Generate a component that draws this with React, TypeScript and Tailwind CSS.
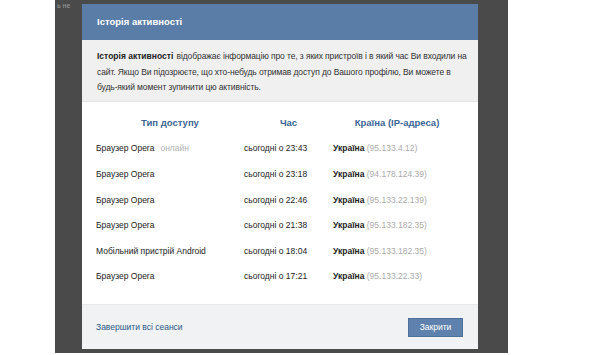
import React from 'react';

type Session = {
  device: string;
  online?: boolean;
  time: string;
  ip: string;
};

const sessions: Session[] = [
  { device: 'Браузер Opera', online: true, time: 'сьогодні о 23:43', ip: '95.133.4.12' },
  { device: 'Браузер Opera', time: 'сьогодні о 23:18', ip: '94.178.124.39' },
  { device: 'Браузер Opera', time: 'сьогодні о 22:46', ip: '95.133.22.139' },
  { device: 'Браузер Opera', time: 'сьогодні о 21:38', ip: '95.133.182.35' },
  { device: 'Мобільний пристрій Android', time: 'сьогодні о 18:04', ip: '95.133.182.35' },
  { device: 'Браузер Opera', time: 'сьогодні о 17:21', ip: '95.133.22.33' },
];

export default function App() {
  return (
    <div className="w-[600px] h-[355px] bg-white font-['Liberation_Sans',Arial,sans-serif] text-[8.5px] text-[#222]">
      {/* dimmed page behind the box */}
      <div className="ml-[55px] w-[453px] h-[353px] bg-[#4a4a4a] pt-[4px] pl-[27px] relative">
        <span className="absolute left-[2px] top-[2px] text-[7px] leading-none text-[#9a9a9a]">ь не</span>

        <div className="w-[396px] h-[345px] flex flex-col bg-white">
          <div className="h-[36px] bg-[#5a7da8] px-[15px] flex items-center">
            <span className="text-white font-bold text-[9.5px]">Історія активності</span>
          </div>

          <div className="h-[62px] bg-[#f0f0f0] border-b border-[#e4e4e4] pl-[15px] pr-[6px] pt-[9px] leading-[15.5px] text-[#333]">
            <b className="text-[#222] mr-[1px]">Історія активності</b>
            <span className="tracking-[-0.1px]"> відображає інформацію про те, з яких пристроїв і в який час Ви входили на сайт. Якщо Ви підозрюєте, що хто-небудь отримав доступ до Вашого профілю, Ви можете в будь-який момент зупинити цю активність.</span>
          </div>

          <div className="flex-1 pl-[14px] pr-[17px] pt-[8px]">
            <div className="grid grid-cols-[148px_89px_128px] h-[26px] items-center font-bold text-[9.5px] text-[#3b6595]">
              <span className="text-center">Тип доступу</span>
              <span className="text-center">Час</span>
              <span className="text-center">Країна (IP-адреса)</span>
            </div>
            {sessions.map((s, i) => (
              <div key={i} className="grid grid-cols-[148px_89px_128px] h-[25.6px] items-center">
                <span>
                  {s.device}
                  {s.online && <span className="ml-[6px] text-[#b0b0b0]">онлайн</span>}
                </span>
                <span>{s.time}</span>
                <span>
                  <span className="font-bold">Україна</span>{' '}
                  <span className="text-[#aaa]">({s.ip})</span>
                </span>
              </div>
            ))}
          </div>

          <div className="h-[45px] bg-[#f0f2f4] border-t border-[#e6e8ea] pl-[14px] pr-[15px] flex items-center justify-between">
            <a href="#" className="text-[#2b5a88]">Завершити всі сеанси</a>
            <button className="w-[55px] h-[19px] bg-[#5e82ad] text-white text-[8.5px] border border-[#4e719b]">
              Закрити
            </button>
          </div>
        </div>
      </div>
    </div>
  );
}
